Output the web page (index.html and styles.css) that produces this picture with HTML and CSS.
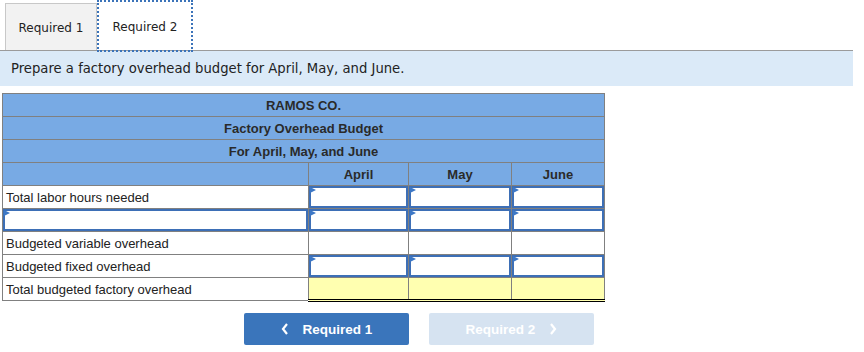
FILE: index.html
```html
<!DOCTYPE html>
<html lang="en">
  <head>
    <meta charset="UTF-8" />
    <title>Factory Overhead Budget</title>
    <link rel="stylesheet" href="styles.css">
  </head>
  <body>
    <div class="tabs">
      <div class="tab">Required 1</div>
      <div class="tab tab-active">Required 2</div>
    </div>

    <div class="prompt">Prepare a factory overhead budget for April, May, and June.</div>

    <table class="budget">
      <tr class="head"><td colspan="4">RAMOS CO.</td></tr>
      <tr class="head"><td colspan="4">Factory Overhead Budget</td></tr>
      <tr class="head"><td colspan="4">For April, May, and June</td></tr>
      <tr class="head cols">
        <td class="label"></td>
        <td class="num-april">April</td>
        <td class="num-may">May</td>
        <td class="num-june">June</td>
      </tr>
      <tr>
        <td class="label">Total labor hours needed</td>
        <td class="entry"><div class="field"></div></td>
        <td class="entry"><div class="field"></div></td>
        <td class="entry"><div class="field"></div></td>
      </tr>
      <tr>
        <td class="entry"><div class="field"></div></td>
        <td class="entry"><div class="field"></div></td>
        <td class="entry"><div class="field"></div></td>
        <td class="entry"><div class="field"></div></td>
      </tr>
      <tr>
        <td class="label">Budgeted variable overhead</td>
        <td></td>
        <td></td>
        <td></td>
      </tr>
      <tr>
        <td class="label">Budgeted fixed overhead</td>
        <td class="entry"><div class="field"></div></td>
        <td class="entry"><div class="field"></div></td>
        <td class="entry"><div class="field"></div></td>
      </tr>
      <tr class="total">
        <td class="label">Total budgeted factory overhead</td>
        <td class="sum"></td>
        <td class="sum"></td>
        <td class="sum"></td>
      </tr>
    </table>

    <div class="nav">
      <button class="nav-btn">
        <svg width="8" height="12" viewBox="0 0 8 12"><polyline points="6,1 2,6 6,11" fill="none" stroke="#fff" stroke-width="2.2"/></svg>
        <span>Required 1</span>
      </button>
      <button class="nav-btn nav-btn-off" disabled>
        <span>Required 2</span>
        <svg width="8" height="12" viewBox="0 0 8 12"><polyline points="2,1 6,6 2,11" fill="none" stroke="#fff" stroke-width="2.2"/></svg>
      </button>
    </div>
  </body>
</html>
```

FILE: styles.css
```css
* {
  box-sizing: border-box;
}

body {
  margin: 0;
  background: #fff;
  font-family: 'Liberation Sans', Arial, sans-serif;
  color: #222;
}

/* Tabs */
.tabs {
  display: flex;
  align-items: flex-end;
  padding: 3px 0 0 5px;
  height: 50px;
}

.tab {
  width: 92px;
  height: 47px;
  display: flex;
  align-items: center;
  justify-content: center;
  padding-top: 2px;
  font-family: 'DejaVu Sans', Verdana, sans-serif;
  font-size: 12px;
  color: #222;
  background: #f2f2f2;
  border: 1px solid #c8c8c8;
  border-bottom: none;
}

.tab-active {
  position: relative;
  z-index: 1;
  margin-left: 2px;
  height: 48px;
  background: #fff;
  border: none;
  outline: 2px dotted #3b73b9;
}

/* Instruction bar */
.prompt {
  width: 853px;
  height: 36px;
  padding: 10px 0 0 11px;
  background: #dbeaf8;
  border-top: 1px solid #9b9b9b;
  font-family: 'DejaVu Sans', Verdana, sans-serif;
  font-size: 13.2px;
  color: #222;
}

/* Budget table */
.budget {
  margin: 7px 0 0 2px;
  border-collapse: collapse;
  font-size: 13px;
  color: #222;
}

.budget td {
  height: 23px;
  padding: 0 3px;
  border: 1px solid #808080;
}

.budget .head td {
  background: #78aae4;
  text-align: center;
  font-weight: bold;
  color: #2a2a2a;
}

.label {
  width: 306px;
}

.num-april { width: 100px; }
.num-may { width: 103px; }
.num-june { width: 93px; }

.budget td.entry {
  padding: 0;
}

.field {
  position: relative;
  height: 22px;
  border: 2px solid #3d6fb6;
}

/* little marker in the corner of an input cell */
.field::before {
  content: "";
  position: absolute;
  left: -1px;
  top: -1px;
  border-left: 6px solid #3d78c6;
  border-top: 3px solid transparent;
  border-bottom: 3px solid transparent;
}

.budget td.sum {
  background: #ffffb0;
  border-bottom: 3px double #000;
}

/* Navigation */
.nav {
  display: flex;
  gap: 20px;
  margin: 11px 0 0 244px;
}

.nav-btn {
  display: flex;
  align-items: center;
  justify-content: center;
  gap: 14px;
  width: 165px;
  height: 32px;
  padding-top: 1px;
  border: none;
  border-radius: 2px;
  background: #3a75bb;
  color: #fff;
  font-family: 'Liberation Sans', Arial, sans-serif;
  font-size: 13.5px;
  font-weight: bold;
  cursor: pointer;
}

.nav-btn-off {
  background: #d6e3f1;
  cursor: default;
}
```
